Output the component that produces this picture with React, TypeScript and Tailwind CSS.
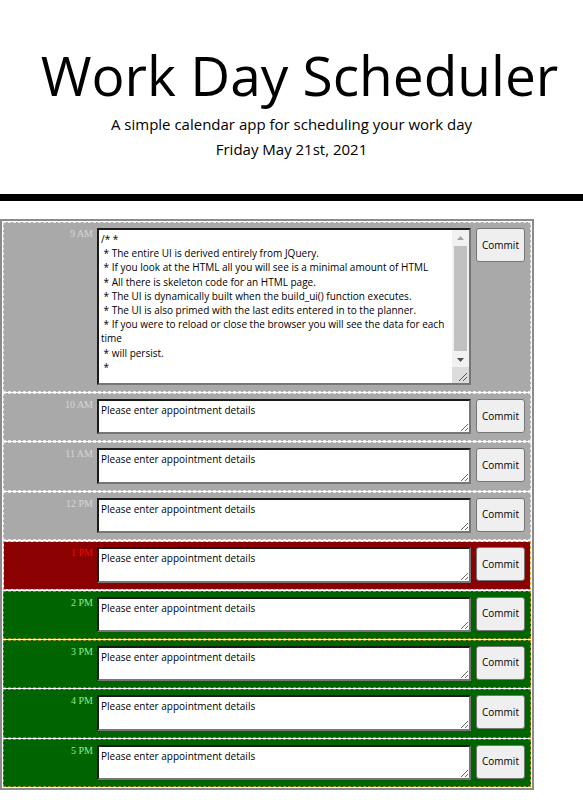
import React from 'react';

type Slot = { label: string; state: 'past' | 'present' | 'future'; text: string; big?: boolean };

const intro = `/* *
 * The entire UI is derived entirely from JQuery.
 * If you look at the HTML all you will see is a minimal amount of HTML
 * All there is skeleton code for an HTML page.
 * The UI is dynamically built when the build_ui() function executes.
 * The UI is also primed with the last edits entered in to the planner.
 * If you were to reload or close the browser you will see the data for each time
 * will persist.
 *
`;

const placeholder = 'Please enter appointment details';

const slots: Slot[] = [
    { label: '9 AM', state: 'past', text: intro, big: true },
    { label: '10 AM', state: 'past', text: placeholder },
    { label: '11 AM', state: 'past', text: placeholder },
    { label: '12 PM', state: 'past', text: placeholder },
    { label: '1 PM', state: 'present', text: placeholder },
    { label: '2 PM', state: 'future', text: placeholder },
    { label: '3 PM', state: 'future', text: placeholder },
    { label: '4 PM', state: 'future', text: placeholder },
    { label: '5 PM', state: 'future', text: placeholder },
];

const rowStyle = {
    past: 'bg-[#a9a9a9] border-[#e6e6e6]',
    present: 'bg-[#8b0000] border-[#e8b020] bg-clip-padding',
    future: 'bg-[#006400] border-[#a08a10]',
};

const labelStyle = {
    past: 'text-[#d6d6d6]',
    present: 'text-[#ff0000]',
    future: 'text-[#90ee90]',
};

const boxBorder = 'border-2 border-t-[#1a1a1a] border-l-[#1a1a1a] border-r-[#767676] border-b-[#767676]';
const boxText = "text-[10px] leading-[14.2px] text-black font-['Open_Sans',sans-serif]";

// the first textarea overflows, so it gets a drawn scrollbar + resize corner
const ScrollBox = ({ text }: { text: string }) => (
    <div className={`ml-[4px] flex h-[157px] w-[374px] bg-white ${boxBorder}`}>
        <textarea
            defaultValue={text}
            spellCheck={false}
            className={`h-full min-w-0 flex-1 resize-none overflow-hidden bg-white p-[2px] outline-none ${boxText}`}
        />
        <div className="flex w-[17px] flex-col bg-[#f1f1f1]">
            <div className="flex h-[15px] items-center justify-center">
                <svg width="7" height="4" viewBox="0 0 7 4">
                    <path d="M0 4 L3.5 0 L7 4 Z" fill="#a3a3a3" />
                </svg>
            </div>
            <div className="flex-1 px-[2px] py-[1px]">
                <div className="h-full w-full bg-[#c1c1c1]" />
            </div>
            <div className="flex h-[15px] items-center justify-center">
                <svg width="7" height="4" viewBox="0 0 7 4">
                    <path d="M0 0 L7 0 L3.5 4 Z" fill="#505050" />
                </svg>
            </div>
            <div className="relative h-[16px] bg-[#dcdcdc]">
                <svg className="absolute bottom-[2px] right-[2px]" width="9" height="9" viewBox="0 0 9 9">
                    <path d="M9 1 L1 9 M9 5 L5 9" stroke="#555" strokeWidth="1" />
                </svg>
            </div>
        </div>
    </div>
);

const Row = ({ slot }: { slot: Slot }) => (
    <div className={`flex items-start border border-dashed pt-[5px] pb-[6px] ${rowStyle[slot.state]}`}>
        <div
            className={`w-[89px] text-right text-[10px] leading-[12px] font-['Liberation_Serif',serif] ${labelStyle[slot.state]}`}
        >
            {slot.label}
        </div>
        {slot.big ? (
            <ScrollBox text={slot.text} />
        ) : (
            <textarea
                defaultValue={slot.text}
                spellCheck={false}
                className={`ml-[4px] h-[35.4px] w-[374px] resize-y bg-white p-[2px] outline-none ${boxBorder} ${boxText}`}
            />
        )}
        <button className="ml-[5px] h-[34px] w-[49px] rounded-[3px] border border-[#767676] bg-[#efefef] text-[10px] text-black font-['Open_Sans',sans-serif]">
            Commit
        </button>
    </div>
);

export default function App() {
    return (
        <div className="min-h-screen w-full bg-white font-['Open_Sans',sans-serif] text-black">
            <header className="border-b-[7px] border-black pt-[42px] pb-[32px] text-center">
                <h1 className="pl-[16px] text-[55px] font-normal leading-[1.2]">Work Day Scheduler</h1>
                <p className="mt-[4px] text-[15px] leading-[25px]">A simple calendar app for scheduling your work day</p>
                <p className="text-[15px] leading-[25px]">Friday May 21st, 2021</p>
            </header>

            <div className="mt-[18px] w-[534px] border-2 border-[#8a8a8a] bg-white p-px">
                <div className="flex flex-col gap-px">
                    {slots.map((s) => (
                        <Row key={s.label} slot={s} />
                    ))}
                </div>
            </div>
        </div>
    );
}
